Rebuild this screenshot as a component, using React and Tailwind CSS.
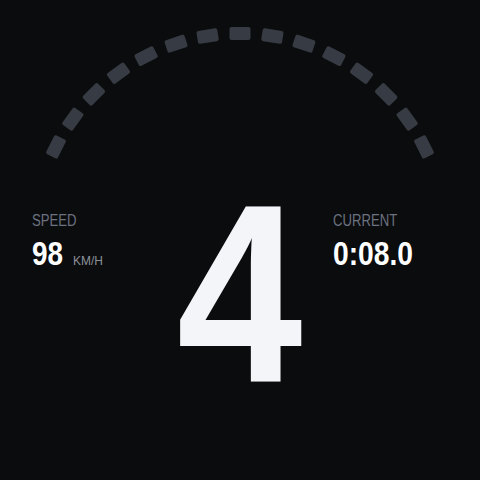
import React from "react";

const FONT = { fontFamily: '"Liberation Sans", Arial, sans-serif' };

function Gauge() {
  const cx = 240, cy = 239.5, r = 206;
  const dashes = [];
  for (let i = -7; i <= 7; i++) {
    const a = i * 9.04;
    const rad = (a * Math.PI) / 180;
    const x = cx + r * Math.sin(rad);
    const y = cy - r * Math.cos(rad);
    dashes.push(
      <rect key={i} x={x - 10.5} y={y - 6.5} width="21" height="13" rx="2" fill="#373c44" transform={`rotate(${a} ${x} ${y})`} />
    );
  }
  return (
    <svg width="480" height="167" viewBox="0 0 480 167" className="block">
      {dashes}
    </svg>
  );
}

export default function App() {
  return (
    <div className="w-[480px] h-[480px] bg-[#0b0c0e] overflow-hidden flex flex-col" style={FONT}>
      <Gauge />
      <div className="grid grid-cols-3">
        <div className="pl-8 pt-[44px] flex flex-col items-start">
          <div className="text-[16px] leading-[20px] text-[#6b7280] origin-left scale-x-[0.82]">SPEED</div>
          <div className="mt-[5px] flex items-baseline">
            <span className="inline-block text-[34px] leading-none font-bold text-white origin-left scale-x-[0.82]">98</span>
            <span className="inline-block ml-[3px] text-[13px] leading-none text-[#8b919a] origin-left scale-x-[0.92]">KM/H</span>
          </div>
        </div>
        <div className="flex justify-center">
          <span className="inline-block text-[254px] leading-none font-bold text-[#f4f5f8] scale-x-[0.89]">4</span>
        </div>
        <div className="pl-[13px] pt-[44px] flex flex-col items-start">
          <div className="text-[16px] leading-[20px] text-[#6b7280] origin-left scale-x-[0.82]">CURRENT</div>
          <div className="mt-[5px] text-[34px] leading-none font-bold text-white origin-left scale-x-[0.83]">0:08.0</div>
        </div>
      </div>
    </div>
  );
}
